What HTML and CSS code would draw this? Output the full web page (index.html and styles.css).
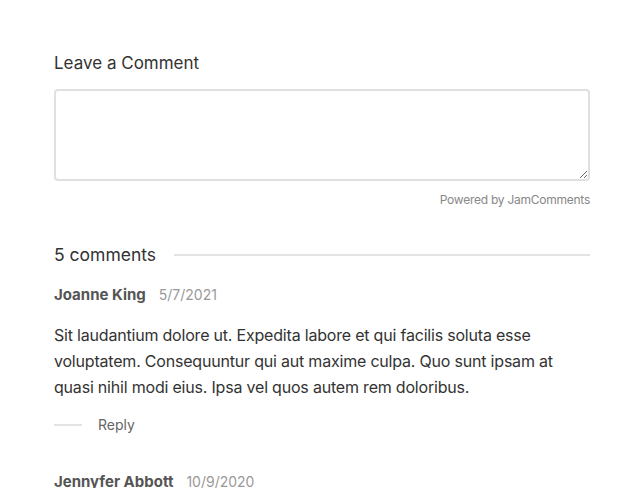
FILE: index.html
```html
<!DOCTYPE html>
<html>
<head>
<meta charset="utf-8">
<link rel="stylesheet" href="styles.css">
</head>
<body>
<div class="wrap">
  <h2 class="title">Leave a Comment</h2>
  <textarea class="box"></textarea>
  <div class="powered">Powered by JamComments</div>
  <div class="count-row">
    <span class="count">5 comments</span>
    <span class="rule"></span>
  </div>
  <div class="comment">
    <div class="meta"><span class="name">Joanne King</span><span class="date">5/7/2021</span></div>
    <p class="text">Sit laudantium dolore ut. Expedita labore et qui facilis soluta esse voluptatem. Consequuntur qui aut maxime culpa. Quo sunt ipsam at quasi nihil modi eius. Ipsa vel quos autem rem doloribus.</p>
    <div class="reply-row"><span class="reply-line"></span><span class="reply">Reply</span></div>
  </div>
  <div class="comment">
    <div class="meta"><span class="name">Jennyfer Abbott</span><span class="date">10/9/2020</span></div>
  </div>
</div>
</body>
</html>
```

FILE: styles.css
```css
html, body { margin: 0; padding: 0; background: #fff; }
body { font-family: Inter, "Liberation Sans", sans-serif; color: #333; }
.wrap { padding: 52px 50px 0 54px; }
.title { margin: 0; font-size: 17px; font-weight: 400; line-height: 22px; color: #333; }
.box { display: block; box-sizing: border-box; width: 100%; height: 92px; margin-top: 15px; border: 2px solid #e0e0e0; border-radius: 4px; resize: vertical; }
.powered { text-align: right; font-size: 12px; letter-spacing: -0.25px; color: #888; margin-top: 12px; line-height: 14px; }
.count-row { display: flex; align-items: center; margin-top: 37px; gap: 18px; }
.count { font-size: 17.5px; line-height: 22px; color: #333; }
.rule { flex: 1; height: 2px; background: #e4e4e4; }
.comment { margin-top: 19px; }
.meta { display: flex; align-items: baseline; gap: 13px; line-height: 20px; }
.name { font-size: 15px; font-weight: 700; color: #555; }
.date { font-size: 14px; color: #999; }
.text { margin: 17px 0 0; font-size: 16px; letter-spacing: -0.2px; line-height: 26px; color: #333; }
.reply-row { display: flex; align-items: center; gap: 16px; margin-top: 16px; }
.reply-line { width: 28px; height: 2px; background: #e4e4e4; }
.reply { font-size: 14px; color: #666; line-height: 18px; }
.comment + .comment { margin-top: 38px; }
```
